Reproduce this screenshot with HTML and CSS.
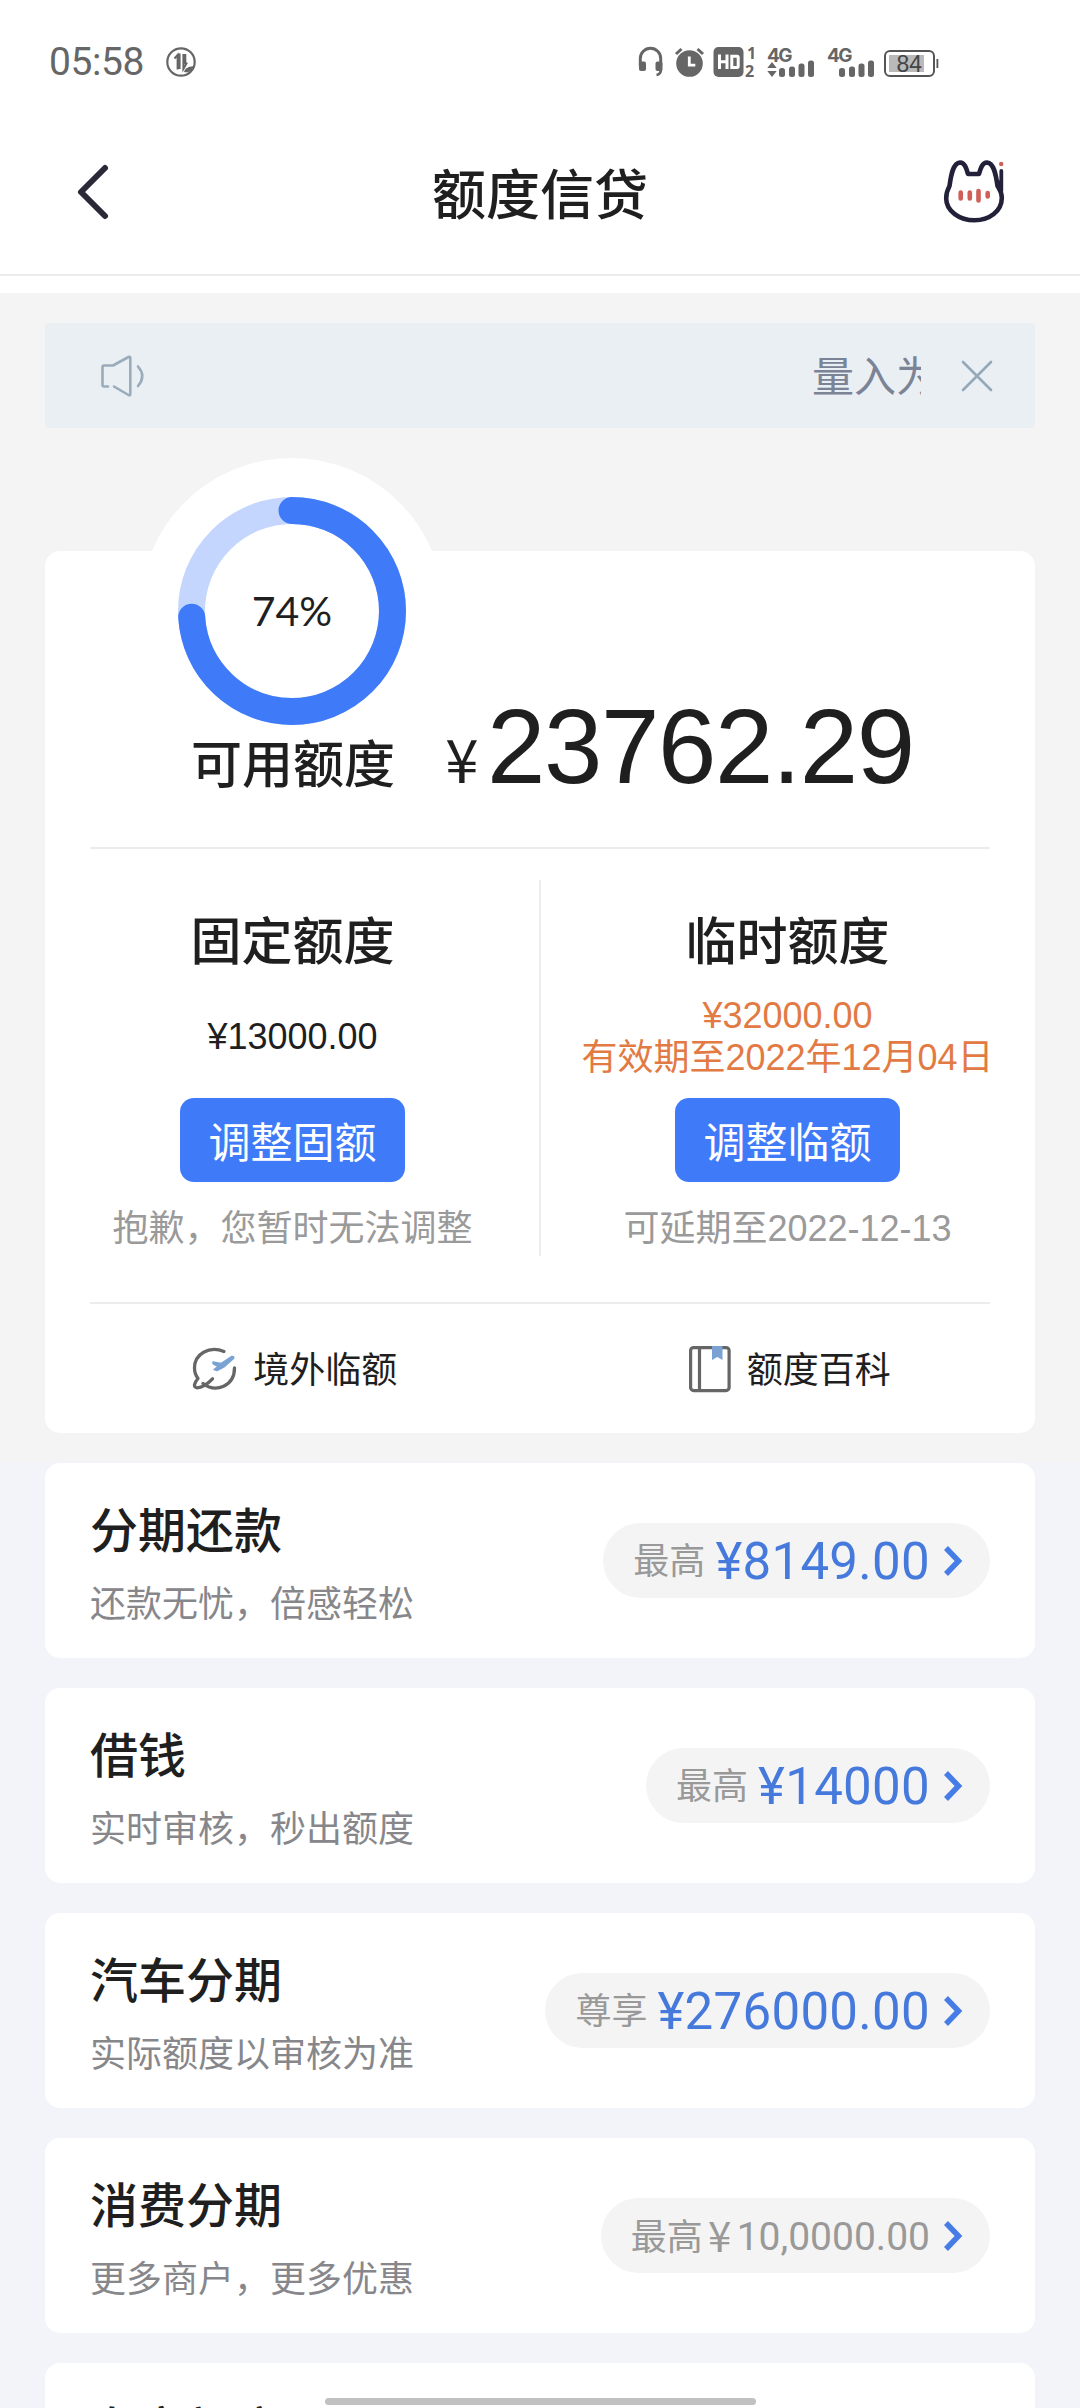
FILE: index.html
```html
<!DOCTYPE html>
<html lang="zh-CN">
<head>
<meta charset="utf-8">
<title>额度信贷</title>
<link rel="stylesheet" href="styles.css">
</head>
<body>
<div class="screen">
  <header class="top">
    <div class="status">
      <span class="time">05:58</span>
      <svg class="data-saver" width="32" height="32" viewBox="0 0 32 32" fill="none" stroke="#666" stroke-width="2.2">
        <circle cx="16" cy="16" r="13.7"/>
        <path d="M9.5 12.5 12.6 9v14.5M14.6 7.500v15.500M18.400 8v15l3.600-6.500M20.300 8v10" stroke-width="2"/>
        <path d="M19 26c1-4 4-5 9.500-6-1 5-4.500 7-9.500 6Z" fill="#666" stroke="none"/>
      </svg>
      <div class="indicators">
        <svg width="303" height="34" viewBox="0 0 303 34" fill="#666">
          <path d="M2.300 21V13.500a10.200 10.200 0 0 1 20.400 0V21" fill="none" stroke="#666" stroke-width="3"/>
          <rect x="1" y="16.500" width="7" height="9.500" rx="2"/><rect x="17.500" y="16.500" width="7" height="9.500" rx="2"/>
          <path d="M23 24c0 4-1.500 5.500-4.500 6" fill="none" stroke="#666" stroke-width="2.600"/>
          <circle cx="51.500" cy="18.500" r="13.300"/>
          <path d="M38 9l5.500-5M65 9l-5.500-5" stroke="#666" stroke-width="3"/>
          <path d="M51.300 11.500v8.700h6" fill="none" stroke="#fff" stroke-width="2.800"/>
          <rect x="75.500" y="2" width="30" height="30" rx="5"/>
          <path d="M81.500 9.500v14.500M89 9.500v14.500M81.500 16.800h7.500M93.800 11.200h5.200q1.200 0 1.200 1.200v8.800q0 1.200-1.200 1.200h-5.200Z" fill="none" stroke="#fff" stroke-width="3"/>
          <text x="109" y="13.500" class="t-sim">1</text><text x="107" y="31.500" class="t-sim">2</text>
          <text x="129" y="16.500" class="t-net">4G</text>
          <path d="M134 17l4.700 6h-9.400ZM134 32l4.700-6h-9.400Z"/>
          <rect x="141" y="23" width="6" height="9" rx="2.500"/><rect x="151" y="21.500" width="6" height="10.500" rx="2.500"/><rect x="160.500" y="18.500" width="6" height="13.500" rx="2.500"/><rect x="170" y="15.500" width="6" height="16.500" rx="2.500"/>
          <text x="189" y="16.500" class="t-net">4G</text>
          <rect x="201" y="23" width="6" height="9" rx="2.500"/><rect x="211" y="21.500" width="6" height="10.500" rx="2.500"/><rect x="220.500" y="18.500" width="6" height="13.500" rx="2.500"/><rect x="230" y="15.500" width="6" height="16.500" rx="2.500"/>
          <rect x="247" y="6" width="49" height="25" rx="5" fill="none" stroke="#555" stroke-width="2"/>
          <rect x="251" y="10" width="35" height="17" fill="#b9b9b9"/>
          <rect x="298.500" y="14" width="1.800" height="9" fill="#555"/>
          <text x="258.500" y="26.500" class="t-bat">84</text>
        </svg>
      </div>
    </div>
    <div class="nav">
      <svg class="back" width="36" height="60" viewBox="0 0 36 60" fill="none" stroke="#2b2838" stroke-width="6" stroke-linecap="round" stroke-linejoin="round"><path d="M30 7 6 31 30 55"/></svg>
      <h1>额度信贷</h1>
      <svg class="cat" width="64" height="66" viewBox="0 0 64 66" fill="none" stroke="#23213a" stroke-width="4.600" stroke-linecap="round" stroke-linejoin="round">
        <path d="M7.500 28C9 17 11 5 18 4.500c5 0 6.500 6 8 11.500h11c1.500-5.500 3-11.500 8-11.500 7 .5 9 12.500 10.500 23.500 2.700 4 4.300 7.500 4.300 12C59.800 53 47.500 62.300 32.500 62.300S4.200 53 4.200 40.500c0-4.500 1.100-8.500 3.300-12.500Z"/>
        <path d="M59.300 13v20" stroke-width="3.800"/><path d="M56 24l2 8"/>
        <circle cx="59.200" cy="6" r="2.200" fill="#cf5f58" stroke="none"/>
        <path d="M18.700 34.500v6M27.800 34.500v6M36.500 33v9.500M45.700 35v3.500" stroke="#cf5f58" stroke-width="4.600"/>
      </svg>
    </div>
  </header>

  <main>
    <div class="notice">
      <svg width="46" height="44" viewBox="0 0 46 44" fill="none" stroke="#9aacbb" stroke-width="2.600" stroke-linecap="round" stroke-linejoin="round">
        <path d="M8 32.500H4q-1.500 0-1.500-1.500V13q0-1.500 1.500-1.500h9L28.500 3q1.800-.8 1.800 1v36q0 1.800-1.800 1L14 32.500"/>
        <path d="M38 12.500q8.500 9.500 0 19.500"/>
      </svg>
      <div class="marquee">量入为出</div>
      <svg class="close" width="32" height="32" viewBox="0 0 32 32" stroke="#94a9b9" stroke-width="2.600" stroke-linecap="round"><path d="M2 2 30 30M30 2 2 30"/></svg>
    </div>

    <section class="quota">
      <div class="gauge">
        <svg width="304" height="304" viewBox="0 0 304 304" fill="none" stroke-width="27">
          <circle cx="152" cy="152" r="152" fill="#fff"/>
          <circle cx="152" cy="153" r="100.500" stroke="#c4d6fd"/>
          <circle cx="152" cy="153" r="100.500" stroke="#3f7bf9" stroke-linecap="round" pathLength="100" stroke-dasharray="74 100" transform="rotate(-90 152 153)"/>
        </svg>
        <span class="percent">74%</span>
      </div>
      <div class="available">
        <h2>可用额度</h2>
        <span class="yen">¥</span><span class="amount">23762.29</span>
      </div>
      <div class="columns">
        <div class="col">
          <h2>固定额度</h2>
          <p class="value">¥13000.00</p>
          <button>调整固额</button>
          <p class="hint">抱歉，您暂时无法调整</p>
        </div>
        <div class="col">
          <h2>临时额度</h2>
          <p class="value orange">¥32000.00<br>有效期至2022年12月04日</p>
          <button>调整临额</button>
          <p class="hint">可延期至2022-12-13</p>
        </div>
      </div>
      <div class="links">
        <a class="link abroad">
          <svg width="46" height="48" viewBox="0 0 46 48" fill="none" stroke="#666" stroke-width="3.300" stroke-linecap="round" stroke-linejoin="round">
            <path d="M32 6.500C17 .5 2.500 9 2.500 23c0 4.500 1.200 7.500 3.500 10.500C2 38 1 42.500 5 42.800 10 42.500 16 38.500 20.500 33.800"/>
            <path d="M11 38.500C24 48.500 42.500 41 42.500 23"/>
            <path d="M21 17l8 1.500L39.500 11.500q3-.5 2 2L32.500 21.500 25 25.500l-3-1 4-3-5-3Z" fill="#7aa3d4" stroke="#7aa3d4" stroke-width="1.500"/>
          </svg>
          <span>境外临额</span>
        </a>
        <a class="link">
          <svg width="46" height="48" viewBox="0 0 46 48" fill="none" stroke="#666" stroke-width="3.200">
            <rect x="4.600" y="2.600" width="38.500" height="43" rx="3"/><path d="M13.500 3v42"/>
            <path d="M26 1h10.500v14l-5.200-3-5.300 3Z" fill="#7aa3d4" stroke="none"/>
          </svg>
          <span>额度百科</span>
        </a>
      </div>
    </section>

    <section class="products">
      <article class="card">
        <div><h3>分期还款</h3><p>还款无忧，倍感轻松</p></div>
        <div class="pill"><span>最高</span><b>¥8149.00</b><svg class="chev" width="22" height="34" viewBox="0 0 22 34"><path d="M4 4 16.500 17 4 30"/></svg></div>
      </article>
      <article class="card">
        <div><h3>借钱</h3><p>实时审核，秒出额度</p></div>
        <div class="pill"><span>最高</span><b>¥14000</b><svg class="chev" width="22" height="34" viewBox="0 0 22 34"><path d="M4 4 16.500 17 4 30"/></svg></div>
      </article>
      <article class="card">
        <div><h3>汽车分期</h3><p>实际额度以审核为准</p></div>
        <div class="pill"><span>尊享</span><b>¥276000.00</b><svg class="chev" width="22" height="34" viewBox="0 0 22 34"><path d="M4 4 16.500 17 4 30"/></svg></div>
      </article>
      <article class="card">
        <div><h3>消费分期</h3><p>更多商户，更多优惠</p></div>
        <div class="pill muted"><span>最高</span><i>¥</i><b>10,0000.00</b><svg class="chev" width="22" height="34" viewBox="0 0 22 34"><path d="M4 4 16.500 17 4 30"/></svg></div>
      </article>
      <article class="card last">
        <div><h3>专享额度</h3></div>
      </article>
    </section>
  </main>
  <div class="home-bar"></div>
</div>
</body>
</html>
```

FILE: styles.css
```css
* { box-sizing: border-box; margin: 0; padding: 0; }

body {
  font-family: "Liberation Sans", "Noto Sans CJK SC", sans-serif;
  color: #1f1f1f;
  background: #f3f4f9;
}

.screen { position: relative; width: 1080px; height: 2408px; overflow: hidden; }
svg { display: block; flex: none; overflow: visible; }
h1, h2, h3 { font-weight: 500; }

.top { height: 293px; background: #fff; }
.status { display: flex; align-items: center; height: 121px; padding: 2px 0 0 49px; }
.time { width: 116px; font: 39px/46px Roboto, sans-serif; letter-spacing: -0.4px; color: #666; }
.indicators { margin-left: 441px; }
.t-sim { font: 700 16px "Open Sans", sans-serif; }
.t-net { font: 700 19px Inter, sans-serif; letter-spacing: -1.500px; }
.t-bat { font: 23px "Liberation Sans", sans-serif; fill: #444; }

.nav {
  display: flex;
  align-items: center;
  justify-content: space-between;
  height: 155px;
  padding: 0 74px 13px 75px;
  border-bottom: 2px solid #ebebeb;
}
.nav h1 { font-size: 54px; line-height: 80px; padding: 10px 0 0 27px; }

main { background: linear-gradient(#f4f4f4 0 1169px, #f3f4f9 1169px); padding: 30px 45px 0; }

.notice {
  display: flex;
  align-items: center;
  height: 105px;
  padding: 0 42px 0 55px;
  border-radius: 4px;
  background: #eaeff3;
}
.marquee {
  width: 109px;
  margin-left: 666px;
  padding-top: 5px;
  overflow: hidden;
  white-space: nowrap;
  font-size: 42px;
  line-height: 60px;
  color: #7b8396;
}
.close { margin-left: auto; }

.quota { position: relative; height: 882px; margin-top: 123px; border-radius: 15px; background: #fff; }
.gauge { position: absolute; left: 95px; top: -93px; width: 304px; height: 304px; }
.percent {
  position: absolute;
  inset: 0;
  text-align: center;
  font: 41px/306px Lato, sans-serif;
}

.available {
  position: relative;
  display: flex;
  align-items: baseline;
  height: 298px;
  margin: 0 45px;
  padding: 138px 0 0 101px;
  border-bottom: 2px solid #ececec;
}
h2 { font-size: 51px; line-height: 76px; padding-top: 2px; }
.yen { width: 50px; margin-left: 42px; text-align: center; font: 60px/76px "Noto Sans CJK SC", sans-serif; }
.amount { font-size: 105px; line-height: 116px; letter-spacing: -1.4px; }

.columns { position: relative; display: flex; height: 455px; }
.columns::before, .columns::after { content: ""; position: absolute; background: #ececec; }
.columns::before { left: 494px; top: 31px; width: 2px; height: 376px; }
.columns::after { left: 45px; right: 45px; bottom: 0; height: 2px; }
.col { display: flex; flex: 1; flex-direction: column; align-items: center; padding-top: 54px; }
.value { display: flex; align-items: center; height: 84px; margin-top: 14px; font-size: 36px; line-height: 42px; text-align: center; }
.value.orange { display: block; color: #e27a43; }
button {
  width: 225px;
  height: 84px;
  margin-top: 19px;
  border: 0;
  border-radius: 14px;
  background: #3f7bf9;
  color: #fff;
  font: 42px/82px "Noto Sans CJK SC", sans-serif;
}
.hint { margin-top: 20px; font-size: 36px; line-height: 54px; color: #9a9a9a; }

.links { display: flex; height: 129px; }
.link { display: flex; flex: 1; align-items: center; justify-content: center; gap: 15px; font-size: 36px; line-height: 54px; }
.link span { padding-top: 4px; }
.abroad { padding-left: 3px; }

.products { display: grid; gap: 30px; margin-top: 30px; }
.card {
  display: flex;
  justify-content: space-between;
  align-items: flex-start;
  height: 195px;
  padding: 33px 45px 0;
  border-radius: 15px;
  background: #fff;
}
.card h3 { font-size: 48px; line-height: 72px; }
.card p { margin-top: 10px; font-size: 36px; line-height: 54px; color: #87878b; }
.card.last { padding-top: 32px; }
.pill {
  display: flex;
  align-items: center;
  height: 75px;
  margin-top: 27px;
  padding: 0 26px 0 30px;
  border-radius: 38px;
  background: #f4f4f4;
  font-size: 36px;
  color: #999;
}
.pill span { padding-bottom: 5px; }
.pill b { margin-left: 10px; padding-top: 1px; font: 51px/75px Roboto, sans-serif; letter-spacing: 0.3px; color: #4679dc; }
.pill i { width: 34px; padding-bottom: 4px; text-align: center; font: 42px/71px "Noto Sans CJK SC", sans-serif; }
.muted span { padding-bottom: 3px; }
.muted b { margin-left: 0; padding-top: 3px; font-size: 39px; letter-spacing: 0; color: #999; }
.chev { margin-left: 12px; fill: none; stroke: #467ce6; stroke-width: 5.500; }

.home-bar {
  position: absolute;
  left: 325px;
  bottom: 3px;
  width: 431px;
  height: 7px;
  border-radius: 4px;
  background: #c1c1c1;
}
```
